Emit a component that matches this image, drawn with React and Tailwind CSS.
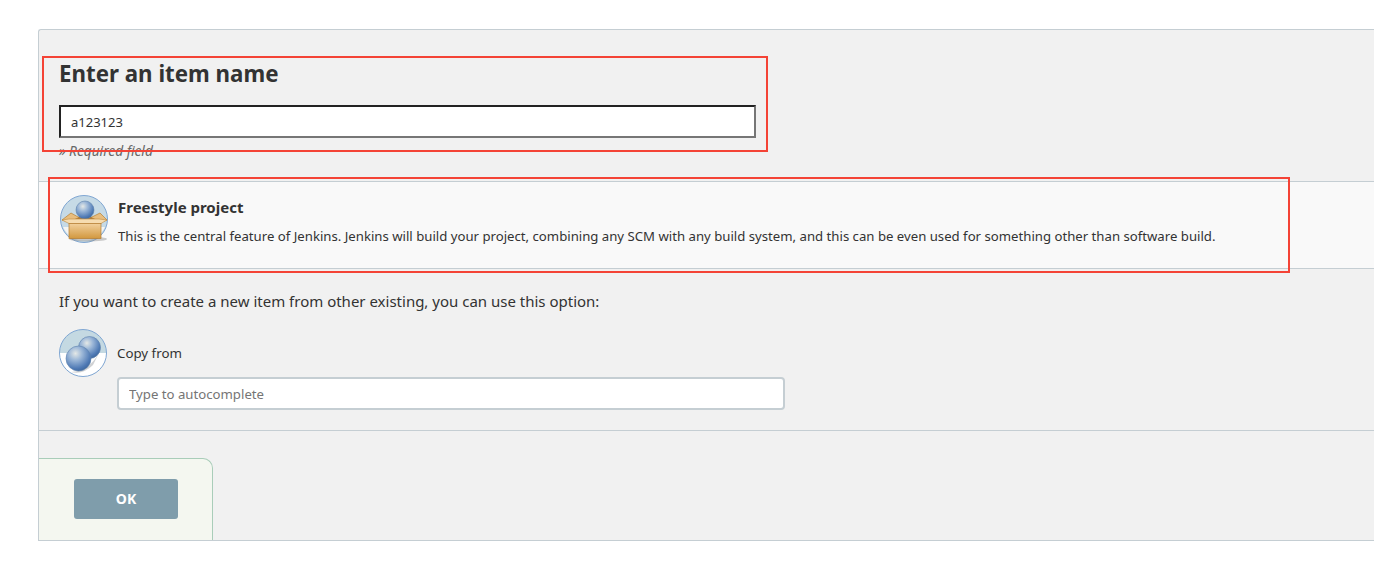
const Sphere = ({ id, cx, cy, r }) => (
  <g>
    <defs>
      <radialGradient id={id} cx="38%" cy="30%" r="75%">
        <stop offset="0%" stopColor="#e4e8e6" />
        <stop offset="35%" stopColor="#9db8d8" />
        <stop offset="80%" stopColor="#4f7ab5" />
        <stop offset="100%" stopColor="#3d6599" />
      </radialGradient>
    </defs>
    <circle cx={cx} cy={cy} r={r} fill={`url(#${id})`} stroke="#5f83ad" strokeWidth="0.6" />
  </g>
);

const FreestyleIcon = () => (
  <svg width="48" height="48" viewBox="0 0 48 48" className="shrink-0">
    <defs>
      <linearGradient id="boxFront" x1="0" y1="0" x2="0" y2="1">
        <stop offset="0%" stopColor="#f2d09c" />
        <stop offset="100%" stopColor="#d2983f" />
      </linearGradient>
    </defs>
    <circle cx="24" cy="24" r="23.5" fill="#c6dae6" stroke="#7fa6d2" />
    <path d="M3 32 H45 A23 23 0 0 1 3 32 Z" fill="#f4f4f2" />
    <ellipse cx="28" cy="44" rx="19" ry="2.6" fill="#8f8f8f" opacity="0.45" />
    <path d="M13 22 H37 L40 28 H10 Z" fill="#a9793d" />
    <Sphere id="freestyleBall" cx={25} cy={15} r={9} />
    <path d="M2 25 L11 18 L19 22.5 L9 27 Z" fill="#e8bd7e" stroke="#b77f30" strokeWidth="0.7" />
    <path d="M47 25 L40 18 L31 22.5 L41 27 Z" fill="#e8bd7e" stroke="#b77f30" strokeWidth="0.7" />
    <path d="M2 25 L9 28.5 H41 L47 25 L39 24 L9 24 Z" fill="#f6dcb0" stroke="#c08a3c" strokeWidth="0.6" />
    <rect x="9" y="28.5" width="32" height="15" fill="url(#boxFront)" stroke="#b57d2e" strokeWidth="0.7" />
  </svg>
);

const CopyIcon = () => (
  <svg width="48" height="48" viewBox="0 0 48 48" className="shrink-0">
    <defs>
      <clipPath id="copyClip">
        <circle cx="24" cy="24" r="23.5" />
      </clipPath>
    </defs>
    <circle cx="24" cy="24" r="23.5" fill="#ffffff" />
    <rect x="0" y="0" width="48" height="24" fill="#c4d9e2" clipPath="url(#copyClip)" />
    <path d="M12 43 Q30 42 40 24 L34 36 Q24 46 12 43 Z" fill="#b0b4b8" opacity="0.6" />
    <Sphere id="copyBallBack" cx={30.5} cy={18.5} r={11} />
    <Sphere id="copyBallFront" cx={19.5} cy={29.5} r={12.5} />
    <circle cx="24" cy="24" r="23.5" fill="none" stroke="#7fa6d2" />
  </svg>
);

export default function App() {
  return (
    <div className="relative h-[578px] w-[1374px] overflow-hidden bg-white pl-[38px] pt-[29px] font-['Noto_Sans',sans-serif] text-[#333]">
      <div className="h-[512px] rounded-tl-[3px] border-t border-b border-l border-[#c5ced3] bg-[#f1f1f1]">
        <div className="h-[151px] pl-5 pt-[26px]">
          <h1 className="text-[22.3px] leading-[36px] font-bold">Enter an item name</h1>
          <input
            readOnly
            value="a123123"
            className="mt-[13px] block h-[33px] w-[697px] border-2 border-t-[#222] border-r-[#767676] border-b-[#767676] border-l-[#222] bg-white pl-[10px] text-[13px] text-[#333] outline-none"
          />
          <p className="mt-[4px] text-[13.7px] leading-[18px] text-[#666] italic">» Required field</p>
        </div>

        <div className="flex h-[88px] items-start gap-[10px] border-t border-b border-[#c5ced3] bg-[#f9f9f9] pl-[21px] pt-[13px]">
          <FreestyleIcon />
          <div>
            <h2 className="-mt-px text-[15px] leading-[26px] font-bold">Freestyle project</h2>
            <p className="mt-[2px] text-[13.18px] leading-[28px]">
              This is the central feature of Jenkins. Jenkins will build your project, combining any SCM with any build system, and this can be even used for something other than software build.
            </p>
          </div>
        </div>

        <div className="h-[162px] border-b border-[#c5ced3] pl-5 pt-[20px]">
          <p className="text-[15px] leading-[24px]">If you want to create a new item from other existing, you can use this option:</p>
          <div className="mt-[16px] flex items-center gap-[10px]">
            <CopyIcon />
            <span className="mt-[1px] text-[13.3px]">Copy from</span>
          </div>
          <input
            readOnly
            placeholder="Type to autocomplete"
            className="ml-[58px] block h-[33px] w-[668px] rounded-[4px] border-2 border-[#c5ced3] bg-white pl-[10px] text-[13.2px] outline-none placeholder:text-[#757575]"
          />
        </div>

        <div className="pt-[27px]">
          <div className="flex h-[82px] w-[174px] items-start rounded-tr-[10px] border-t border-r border-[#a9cdb9] bg-[#f4f7f0] pl-[35px] pt-[20px]">
            <button className="h-[40px] w-[104px] rounded-[3px] bg-[#7f9dab] pb-[2px] text-[14px] font-bold text-white">OK</button>
          </div>
        </div>
      </div>

      <div className="absolute top-[56px] left-[42px] h-[96px] w-[726px] border-2 border-[#f44336]" />
      <div className="absolute top-[177px] left-[48px] h-[96px] w-[1242px] border-2 border-[#f44336]" />
    </div>
  );
}
